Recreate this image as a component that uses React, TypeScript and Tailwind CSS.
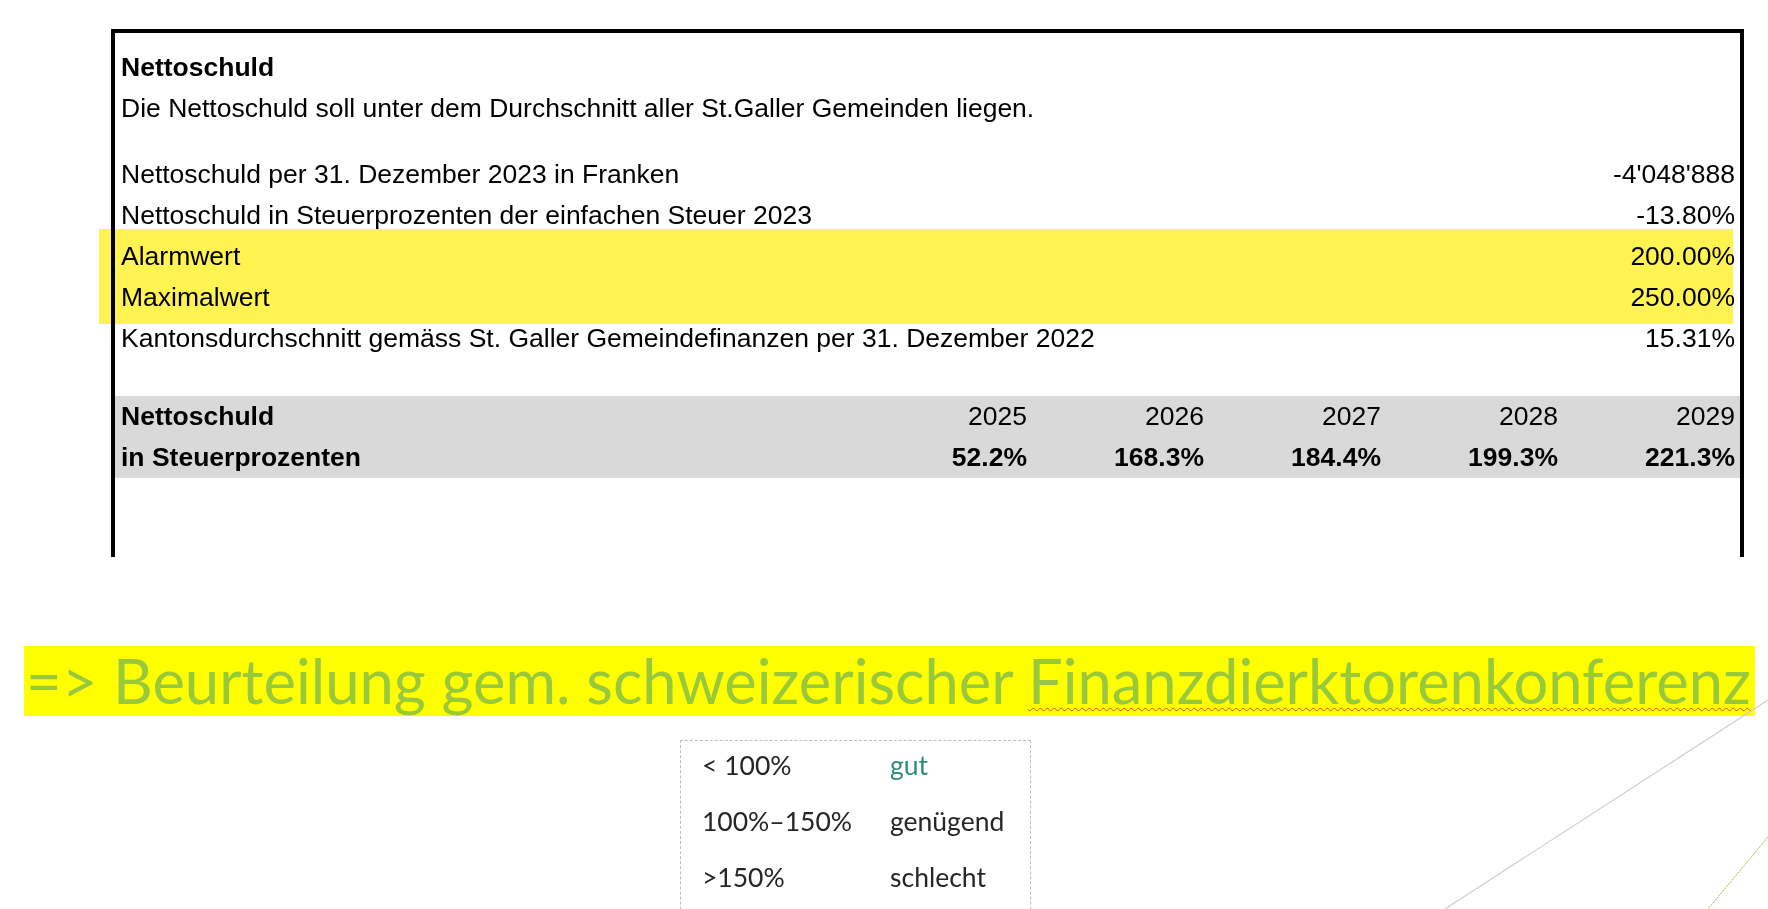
import React from 'react';

const rows = [
  { label: 'Nettoschuld per 31. Dezember 2023 in Franken', value: "-4'048'888" },
  { label: 'Nettoschuld in Steuerprozenten der einfachen Steuer 2023', value: '-13.80%' },
  { label: 'Alarmwert', value: '200.00%' },
  { label: 'Maximalwert', value: '250.00%' },
  { label: 'Kantonsdurchschnitt gemäss St. Galler Gemeindefinanzen per 31. Dezember 2022', value: '15.31%' },
];

const years = ['2025', '2026', '2027', '2028', '2029'];
const percents = ['52.2%', '168.3%', '184.4%', '199.3%', '221.3%'];

const ratings = [
  { range: '< 100%', label: 'gut', color: 'text-[#2f8c7c]' },
  { range: '100%–150%', label: 'genügend', color: 'text-[#262626]' },
  { range: '>150%', label: 'schlecht', color: 'text-[#262626]' },
];

function DebtSheet() {
  return (
    <div className="ml-[111px] mt-[29px] h-[528px] w-[1633px] border-x-4 border-t-4 border-black bg-white pt-[14px] font-['Liberation_Sans',Arial,sans-serif] text-[26.5px] text-black">
      <div className="flex h-[41px] items-center pl-[6px] font-bold">Nettoschuld</div>
      <div className="flex h-[42px] items-center pl-[6px]">
        Die Nettoschuld soll unter dem Durchschnitt aller St.Galler Gemeinden liegen.
      </div>
      <div className="h-[24px]" />
      {rows.map((r) => (
        <div key={r.label} className="flex h-[41px] items-center justify-between pl-[6px] pr-[5px]">
          <span>{r.label}</span>
          <span>{r.value}</span>
        </div>
      ))}
      <div className="h-[37px]" />
      <div className="bg-[#d9d9d9] pl-[6px] pr-[5px]">
        <div className="grid h-[41px] grid-cols-[1fr_177px_177px_177px_177px_177px] items-center">
          <span className="font-bold">Nettoschuld</span>
          {years.map((y) => (
            <span key={y} className="text-right">{y}</span>
          ))}
        </div>
        <div className="grid h-[41px] grid-cols-[1fr_177px_177px_177px_177px_177px] items-center font-bold">
          <span>in Steuerprozenten</span>
          {percents.map((p) => (
            <span key={p} className="text-right">{p}</span>
          ))}
        </div>
      </div>
    </div>
  );
}

export default function App() {
  return (
    <div className="relative h-[909px] w-[1768px] overflow-hidden bg-white">
      <DebtSheet />

      {/* highlighter over the Alarmwert / Maximalwert rows */}
      <div className="pointer-events-none absolute left-[99px] top-[229px] h-[95px] w-[1634px] bg-[#fff352] mix-blend-multiply" />

      <div className="ml-[24px] mt-[89px] h-[70px] w-[1731px] whitespace-nowrap bg-[#ffff00] pl-[2px] font-['Lato',sans-serif] text-[61.5px] leading-[68px] text-[#98c93c]">
        =&gt; Beurteilung gem. schweizerischer{' '}
        <span className="underline decoration-[#e8453c] decoration-wavy decoration-1 underline-offset-[3px]">
          Finanzdierktorenkonferenz
        </span>
      </div>

      <div className="ml-[680px] mt-[24px] h-[200px] w-[351px] border border-dashed border-[#bdbdbd] pl-[21px] font-['Lato',sans-serif] text-[26.5px]">
        <div className="flex flex-col gap-[8px] pt-[1px]">
          {ratings.map((r) => (
            <div key={r.range} className="grid h-[48px] grid-cols-[188px_1fr] items-center">
              <span className="text-[#262626]">{r.range}</span>
              <span className={r.color}>{r.label}</span>
            </div>
          ))}
        </div>
      </div>

      <svg className="pointer-events-none absolute inset-0" width="1768" height="909" viewBox="0 0 1768 909">
        <line x1="1768" y1="700" x2="1445" y2="909" stroke="#cfcfcf" strokeWidth="1.2" />
        <line x1="1768" y1="837" x2="1708" y2="909" stroke="#8dc63f" strokeWidth="1" strokeDasharray="2 1" />
      </svg>
    </div>
  );
}
